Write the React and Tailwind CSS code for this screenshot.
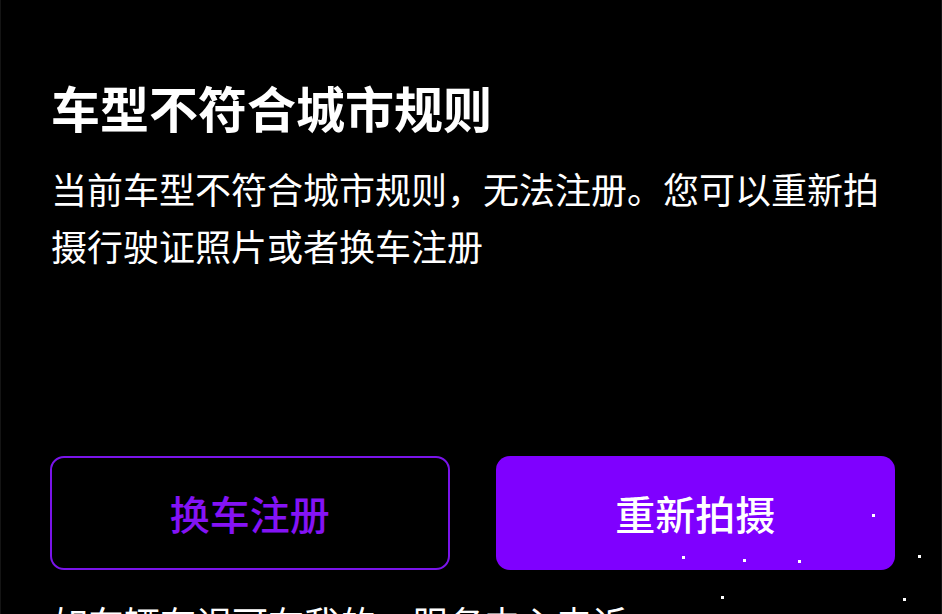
const font = { fontFamily: '"Noto Sans CJK SC", "Noto Sans", sans-serif' }

// scattered sparkle specks over the lower area
const specks = [
  [871, 514], [681, 556], [742, 559], [797, 560],
  [917, 555], [720, 596], [902, 598],
]

export default function App() {
  return (
    <div
      className="relative h-[614px] w-[942px] overflow-hidden bg-black border-x border-[#141414] pl-[49px] pr-[46px] pt-[82px]"
      style={font}
    >
      <h1 className="ml-[1px] text-[49px] leading-[49px] font-bold text-white">
        车型不符合城市规则
      </h1>
      <p className="ml-[1px] mt-[29px] text-[36px] leading-[57px] text-white">
        当前车型不符合城市规则，无法注册。您可以重新拍摄行驶证照片或者换车注册
      </p>

      <div className="mt-[182px] grid grid-cols-2 gap-[46px]">
        <button className="h-[114px] rounded-[14px] border-2 border-[#7a14ea] text-[40px] font-medium text-[#8413f5]">
          换车注册
        </button>
        <button className="h-[114px] rounded-[14px] bg-[#7f00ff] text-[40px] font-medium text-white">
          重新拍摄
        </button>
      </div>

      <p className="ml-[2px] mt-[24px] text-[36px] leading-[57px] text-white whitespace-nowrap">
        如车辆有误可在我的，服务中心申诉
      </p>

      {specks.map(([x, y]) => (
        <span
          key={`${x}-${y}`}
          className="absolute h-[3px] w-[3px] bg-white"
          style={{ left: x, top: y }}
        />
      ))}
    </div>
  )
}
